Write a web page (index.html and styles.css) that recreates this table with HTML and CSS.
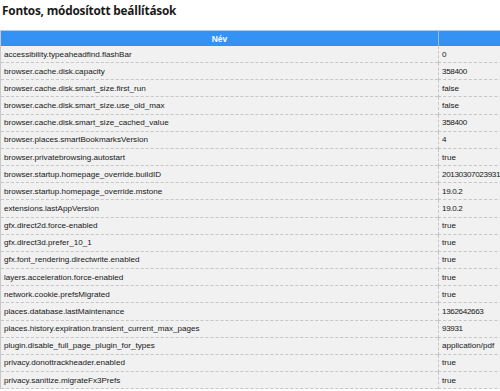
FILE: index.html
```html
<!DOCTYPE html>
<html>
<head>
<meta charset="utf-8">
<link rel="stylesheet" href="styles.css">
</head>
<body>
<h1 class="title">Fontos, módosított beállítások</h1>
<div class="prefs">
  <div class="head name">Név</div><div class="head val"></div>
  <div class="cell">accessibility.typeaheadfind.flashBar</div><div class="cell v num">0</div>
  <div class="cell">browser.cache.disk.capacity</div><div class="cell v num">358400</div>
  <div class="cell">browser.cache.disk.smart_size.first_run</div><div class="cell v">false</div>
  <div class="cell">browser.cache.disk.smart_size.use_old_max</div><div class="cell v">false</div>
  <div class="cell">browser.cache.disk.smart_size_cached_value</div><div class="cell v num">358400</div>
  <div class="cell">browser.places.smartBookmarksVersion</div><div class="cell v num">4</div>
  <div class="cell">browser.privatebrowsing.autostart</div><div class="cell v">true</div>
  <div class="cell">browser.startup.homepage_override.buildID</div><div class="cell v num">20130307023931</div>
  <div class="cell">browser.startup.homepage_override.mstone</div><div class="cell v num">19.0.2</div>
  <div class="cell">extensions.lastAppVersion</div><div class="cell v num">19.0.2</div>
  <div class="cell">gfx.direct2d.force-enabled</div><div class="cell v">true</div>
  <div class="cell">gfx.direct3d.prefer_10_1</div><div class="cell v">true</div>
  <div class="cell">gfx.font_rendering.directwrite.enabled</div><div class="cell v">true</div>
  <div class="cell">layers.acceleration.force-enabled</div><div class="cell v">true</div>
  <div class="cell">network.cookie.prefsMigrated</div><div class="cell v">true</div>
  <div class="cell">places.database.lastMaintenance</div><div class="cell v num">1362642663</div>
  <div class="cell">places.history.expiration.transient_current_max_pages</div><div class="cell v num">93931</div>
  <div class="cell">plugin.disable_full_page_plugin_for_types</div><div class="cell v">application/pdf</div>
  <div class="cell">privacy.donottrackheader.enabled</div><div class="cell v">true</div>
  <div class="cell">privacy.sanitize.migrateFx3Prefs</div><div class="cell v">true</div>
</div>
</body>
</html>
```
FILE: styles.css
```css
html, body {
  margin: 0;
  padding: 0;
  background: #ffffff;
  overflow: hidden;
}
body {
  font-family: "Liberation Sans", Arial, sans-serif;
  color: #111;
}
.title {
  margin: 0;
  padding: 1px 0 0 2px;
  height: 30px;
  box-sizing: border-box;
  font-family: "Open Sans", "Noto Sans", sans-serif;
  font-size: 11.8px;
  letter-spacing: -0.2px;
  font-weight: 700;
  color: #1a1a1a;
  line-height: 18px;
}
.prefs {
  display: grid;
  grid-template-columns: 437px 80px;
  grid-auto-rows: 17.16px;
  grid-template-rows: 16px;
  width: 517px;
  font-size: 8.1px;
  border-left: 1px solid #c9c9c9;
}
.head {
  background: #3492f4;
  color: #fff;
  font-weight: 700;
  font-size: 8.4px;
  border-top: 1px solid #a9cdf3;
  display: flex;
  align-items: center;
  box-sizing: border-box;
}
.head.name {
  justify-content: center;
}
.head.val {
  border-left: 1px solid #8fbdf0;
}
.cell {
  background: #f1f1f1;
  box-sizing: border-box;
  border-bottom: 1px dashed #c6c6c6;
  padding: 0 0 0 3px;
  display: flex;
  align-items: center;
  white-space: nowrap;
  overflow: hidden;
  color: #171717;
}
.cell.v {
  border-left: 1px dashed #c6c6c6;
}
.cell.num {
  letter-spacing: -0.35px;
}
```
